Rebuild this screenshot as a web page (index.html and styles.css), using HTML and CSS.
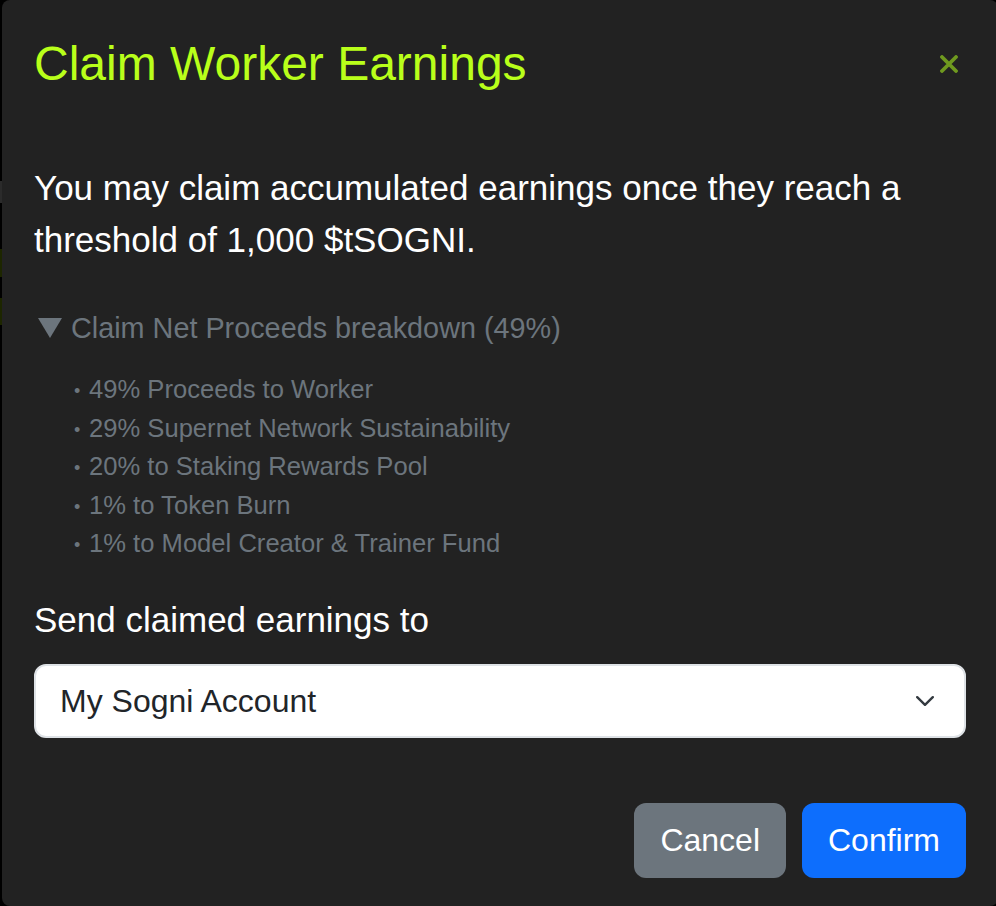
FILE: index.html
```html
<!DOCTYPE html>
<html lang="en">
<head>
<meta charset="utf-8">
<title>Claim Worker Earnings</title>
<link rel="stylesheet" href="styles.css">
</head>
<body>
<div class="modal" role="dialog" aria-labelledby="modal-title">
  <header class="modal-header">
    <h2 class="modal-title" id="modal-title">Claim Worker Earnings</h2>
    <button class="btn-close" type="button" aria-label="Close">
      <svg width="18" height="18" viewBox="0 0 18 18" aria-hidden="true"><path d="M2 2 16 16M16 2 2 16" stroke="currentColor" stroke-width="3.8" stroke-linecap="round"/></svg>
    </button>
  </header>
  <div class="modal-body">
    <p class="lead">You may claim accumulated earnings once they reach a threshold of 1,000 $tSOGNI.</p>
    <details class="breakdown" open>
      <summary><svg class="marker" width="24" height="20" viewBox="0 0 24 20" aria-hidden="true"><path d="M0 0H24L12 20Z" fill="currentColor"/></svg><span>Claim Net Proceeds breakdown (49%)</span></summary>
      <ul class="split-list">
        <li>49% Proceeds to Worker</li>
        <li>29% Supernet Network Sustainability</li>
        <li>20% to Staking Rewards Pool</li>
        <li>1% to Token Burn</li>
        <li>1% to Model Creator &amp; Trainer Fund</li>
      </ul>
    </details>
    <label class="field-label" for="dest">Send claimed earnings to</label>
    <div class="select" id="dest" role="combobox" aria-expanded="false" tabindex="0">
      <span>My Sogni Account</span>
      <svg width="18" height="10" viewBox="0 0 18 10" aria-hidden="true"><path d="M1.2 1.2 9 8.8 16.8 1.2" fill="none" stroke="#343a40" stroke-width="2.4" stroke-linecap="round" stroke-linejoin="round"/></svg>
    </div>
  </div>
  <footer class="modal-footer">
    <button class="btn btn-secondary" type="button">Cancel</button>
    <button class="btn btn-primary" type="button">Confirm</button>
  </footer>
</div>
</body>
</html>
```

FILE: styles.css
```css
html, body {
  margin: 0;
  height: 100%;
}

body {
  overflow: hidden;
  font-family: "Liberation Sans", Arial, sans-serif;
  background:
    linear-gradient(to bottom,
      #000 0 181px,
      #2b2b2b 181px 203px,
      #000 203px 249px,
      #1d2600 249px 277px,
      #000 277px 298px,
      #1d2600 298px 325px,
      #000 325px) left top / 2px 100% no-repeat,
    #000;
}

.modal {
  box-sizing: border-box;
  width: 996px;
  height: 906px;
  margin-left: 2px;
  background: #222222;
  border-radius: 8px;
  display: flex;
  flex-direction: column;
}

.modal-header {
  display: flex;
  align-items: center;
  justify-content: space-between;
  padding: 35px 32px 35px 32px;
}

.modal-title {
  margin: 0;
  font-size: 48px;
  line-height: 1.2;
  font-weight: 400;
  color: #b9ff1a;
}

.btn-close {
  display: flex;
  padding: 0;
  margin-right: 8px;
  border: 0;
  background: none;
  color: #6f991f;
  cursor: pointer;
}

.modal-body {
  padding: 34px 32px 32px;
}

.lead {
  margin: 0 0 41px;
  font-size: 35px;
  line-height: 52px;
  color: #ffffff;
}

.breakdown summary {
  display: flex;
  align-items: center;
  gap: 9px;
  list-style: none;
  font-size: 28.8px;
  line-height: 43.2px;
  color: #6c757d;
  cursor: pointer;
}

.breakdown summary::-webkit-details-marker {
  display: none;
}

.marker {
  margin-left: 4px;
  flex: none;
}

.split-list {
  margin: 20.6px 0 0;
  padding: 0 0 0 40px;
  list-style: none;
  font-size: 25.6px;
  line-height: 38.4px;
  color: #6c757d;
}

.split-list li::before {
  content: "\2022";
  display: inline-block;
  width: 15px;
  font-size: 18px;
  line-height: 1;
  vertical-align: 1px;
}

.field-label {
  display: block;
  margin: 32px 0 18px;
  font-size: 35px;
  line-height: 52px;
  color: #ffffff;
}

.select {
  box-sizing: border-box;
  display: flex;
  align-items: center;
  justify-content: space-between;
  height: 74px;
  padding: 0 30px 0 24px;
  background: #ffffff;
  border: 2px solid #dee2e6;
  border-radius: 12px;
  font-size: 32px;
  color: #212529;
}

.modal-footer {
  display: flex;
  justify-content: flex-end;
  gap: 16px;
  padding: 33px 32px 0;
}

.btn {
  height: 75px;
  padding: 0 26px;
  border: 0;
  border-radius: 12px;
  font-family: inherit;
  font-size: 32px;
  color: #ffffff;
  cursor: pointer;
}

.btn-secondary {
  background: #6c757d;
}

.btn-primary {
  background: #0d6efd;
}
```
